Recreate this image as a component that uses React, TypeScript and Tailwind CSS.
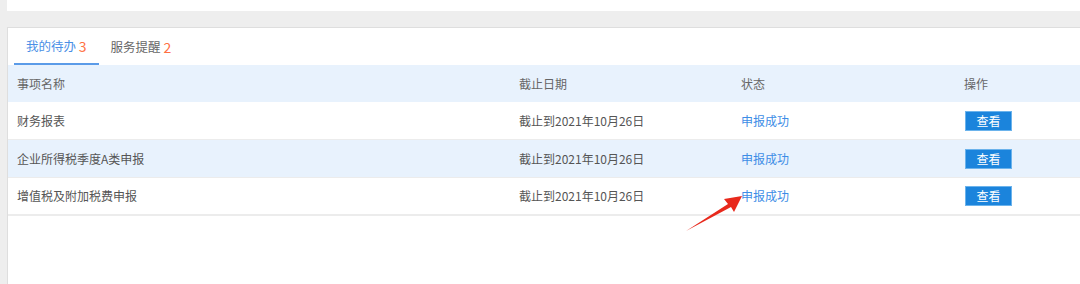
import React from "react";

const rows = [
  { name: "财务报表", date: "截止到2021年10月26日", status: "申报成功" },
  { name: "企业所得税季度A类申报", date: "截止到2021年10月26日", status: "申报成功" },
  { name: "增值税及附加税费申报", date: "截止到2021年10月26日", status: "申报成功" },
];

const font = { fontFamily: '"Noto Sans CJK SC", "Noto Sans", sans-serif' };

export default function App() {
  return (
    <div className="relative w-[1080px] h-[284px] overflow-hidden bg-[#eeeeee] pl-[7px]" style={font}>
      {/* top panel */}
      <div className="h-[11px] bg-white" />
      <div className="h-[16px]" />

      {/* todo panel */}
      <div className="h-[257px] bg-white border-t border-l border-[#dedede]">
        {/* tabs */}
        <div className="flex h-[37px] pl-[6px] text-[12.5px]">
          <div className="flex items-center px-[12px] pt-[2px] border-b-2 border-[#5b9be8] text-[#4a8fe6]">
            我的待办&nbsp;<span className="text-[14px] text-[#ff7043]">3</span>
          </div>
          <div className="flex items-center px-[12px] pt-[2px] text-[#666666]">
            服务提醒&nbsp;<span className="text-[14px] text-[#ff7043]">2</span>
          </div>
        </div>

        {/* table */}
        <div className="text-[12px] text-[#555555]">
          <div className="grid grid-cols-[502px_222px_223px_1fr] h-[37px] items-center bg-[#e8f2fd] text-[#666666]">
            <div className="pl-[9px]">事项名称</div>
            <div className="pl-[9px]">截止日期</div>
            <div className="pl-[9px]">状态</div>
            <div className="pl-[9px]">操作</div>
          </div>
          {rows.map((r, i) => (
            <div
              key={r.name}
              className={`grid grid-cols-[502px_222px_223px_1fr] h-[38px] items-center border-b border-[#ececec] ${
                i === 1 ? "bg-[#e8f2fd]" : "bg-white"
              } ${i === 2 ? "border-b-2" : ""}`}
            >
              <div className="pl-[9px]">{r.name}</div>
              <div className="pl-[9px]">{r.date}</div>
              <div className="pl-[9px] text-[#3d8de6]">{r.status}</div>
              <div className="pl-[10px]">
                <button className="w-[47px] h-[20px] bg-[#1b84dc] border border-[#6bb3ec] text-white text-[12px] leading-none">
                  查看
                </button>
              </div>
            </div>
          ))}
        </div>
      </div>

      {/* red annotation arrow */}
      <svg className="absolute inset-0 pointer-events-none" width="1080" height="284" viewBox="0 0 1080 284">
        <polygon
          points="686,231 728,204 724,199 742,196 734,212 731,207"
          fill="#e8291c"
        />
      </svg>
    </div>
  );
}
